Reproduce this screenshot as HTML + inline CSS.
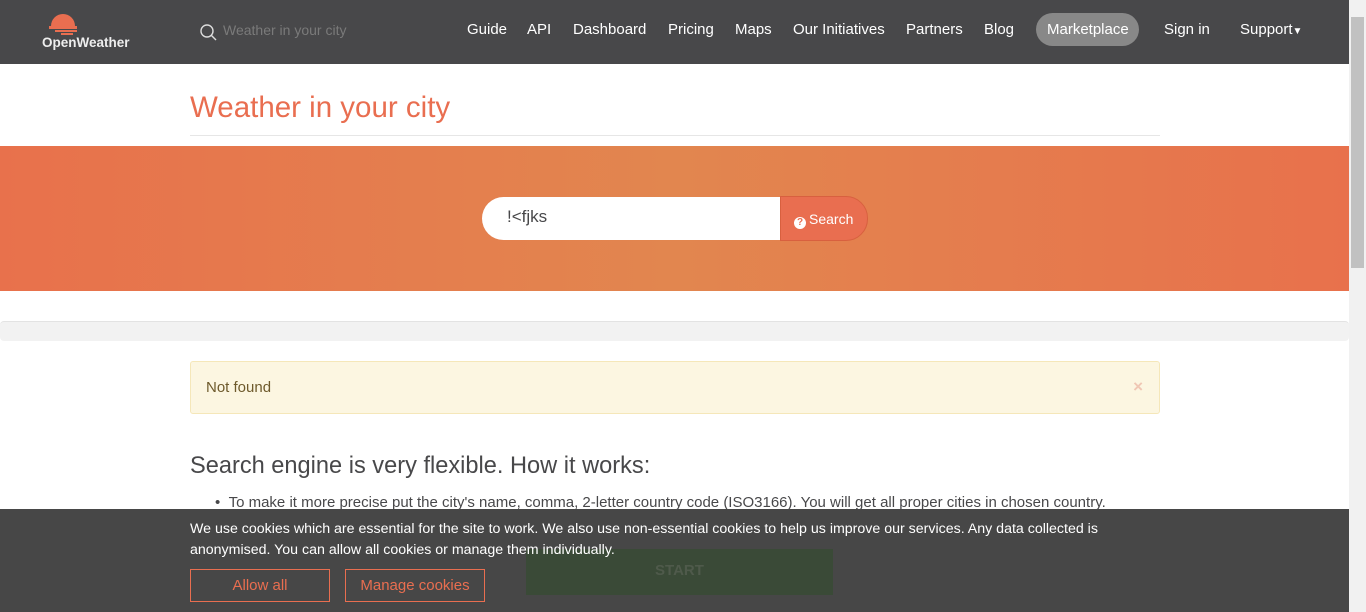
<!DOCTYPE html>
<html><head><meta charset="utf-8"><style>
*{box-sizing:border-box;margin:0;padding:0}
body{width:1366px;height:612px;overflow:hidden;position:relative;font-family:"Liberation Sans",Arial,sans-serif;background:#fff;color:#48484a}
.nav{position:absolute;left:0;top:0;width:1349px;height:64px;background:#48484a}
.nav a{position:absolute;top:21px;color:#fff;font-size:15px;white-space:nowrap}
.mp{position:absolute;left:1036px;top:13px;width:103px;height:33px;border-radius:17px;background:#888}
.sb{position:absolute;right:0;top:0;width:17px;height:612px;background:#f1f1f1}
.thumb{position:absolute;left:2px;top:17px;width:13px;height:251px;background:#c1c1c1}
h1{position:absolute;left:190px;top:91px;font-weight:400;font-size:29.5px;color:#e96e50}
.hr{position:absolute;left:190px;top:135px;width:970px;height:1px;background:#e6e6e6}
.hero{position:absolute;left:0;top:146px;width:1349px;height:145px;background:linear-gradient(90deg,#e8714c,#e2864f 50%,#e8714c)}
.inp{position:absolute;left:482px;top:197px;width:300px;height:43px;background:#fff;border-radius:22px 0 0 22px;font-size:17px;padding:10px 0 0 25px;color:#48484a}
.btn{position:absolute;left:780px;top:196px;width:88px;height:45px;background:#e96e50;border:1px solid #d8603f;border-radius:0 22px 22px 0;color:#fff;font-size:14px;padding:14px 0 0 13px}
.btn i{display:inline-block;width:12px;height:12px;border-radius:50%;background:#fff;color:#e96e50;font-size:10px;font-style:normal;font-weight:bold;text-align:center;line-height:12px;vertical-align:-1px;margin-right:3px}
.grey{position:absolute;left:0;top:321px;width:1349px;height:20px;background:#f2f2f2;border-top:1px solid #e3e3e3;border-radius:4px}
.alert{position:absolute;left:190px;top:361px;width:970px;height:53px;background:#fcf6e1;border:1px solid #f5e7b9;border-radius:3px;font-size:15px;color:#6e5a2c;padding:17px 0 0 15px}
.alert b{position:absolute;right:16px;top:15px;color:#f0c7b4;font-size:17px}
h2{position:absolute;left:190px;top:453px;font-weight:400;font-size:23.6px;color:#48484a}
.li{position:absolute;left:215px;top:494px;font-size:15px;color:#48484a}
.ck{position:absolute;left:0;top:509px;width:1349px;height:103px;background:#474747}
.ck p{position:absolute;left:190px;top:10px;color:#fff;font-size:14.2px;line-height:21px;width:920px}
.cb{position:absolute;top:60px;height:33px;border:1px solid #e96e50;color:#e96e50;font-size:15px;text-align:center;line-height:31px}
.ad{position:absolute;left:526px;top:40px;width:307px;height:46px;background:#3a4a37;color:#4f5a4b;font-weight:bold;font-size:15px;text-align:center;line-height:44px}
</style></head><body>
<div class="nav">
<svg style="position:absolute;left:47px;top:10px" width="32" height="26" viewBox="0 0 32 26"><path d="M4 16 A12 12 0 0 1 28 16 Z" fill="#e96e50"/><rect x="2" y="16" width="28" height="3" fill="#e96e50"/><rect x="8" y="20" width="22" height="2" fill="#e96e50"/><rect x="14" y="23" width="12" height="2" fill="#e96e50"/></svg>
<div style="position:absolute;left:42px;top:35px;color:#eee;font-weight:bold;font-size:13.5px">OpenWeather</div>
<svg style="position:absolute;left:200px;top:24px" width="17" height="17" viewBox="0 0 17 17"><circle cx="7" cy="7" r="6" fill="none" stroke="#ddd" stroke-width="1.4"/><path d="M11 11l5 5" stroke="#ddd" stroke-width="1.4"/></svg>
<span style="position:absolute;left:223px;top:22px;color:#7a7a7a;font-size:14px">Weather in your city</span>
<a style="left:467px">Guide</a><a style="left:527px">API</a><a style="left:573px">Dashboard</a><a style="left:668px">Pricing</a><a style="left:735px">Maps</a><a style="left:793px">Our Initiatives</a><a style="left:906px">Partners</a><a style="left:984px">Blog</a>
<div class="mp"></div><a style="left:1047px">Marketplace</a><a style="left:1164px">Sign in</a><a style="left:1240px">Support<span style="font-size:10px">▼</span></a>
</div>
<h1>Weather in your city</h1><div class="hr"></div>
<div class="hero"></div>
<div class="inp">!&lt;fjks</div>
<div class="btn"><i>?</i>Search</div>
<div class="grey"></div>
<div class="alert">Not found<b>×</b></div>
<h2>Search engine is very flexible. How it works:</h2>
<div class="li">•&nbsp;&nbsp;To make it more precise put the city's name, comma, 2-letter country code (ISO3166). You will get all proper cities in chosen country.</div>
<div class="ck">
<div class="ad">START</div>
<p>We use cookies which are essential for the site to work. We also use non-essential cookies to help us improve our services. Any data collected is anonymised. You can allow all cookies or manage them individually.</p>
<div class="cb" style="left:190px;width:140px">Allow all</div>
<div class="cb" style="left:345px;width:140px">Manage cookies</div>
</div>
<div class="sb"><div class="thumb"></div></div>
</body></html>
